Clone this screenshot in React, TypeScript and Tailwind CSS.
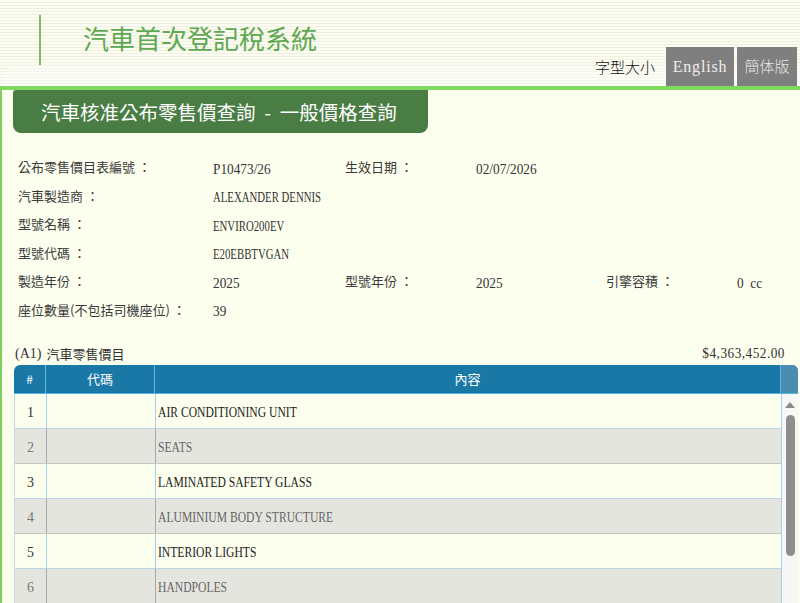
import React from "react";

const sans = "font-['Noto_Sans_CJK_TC','Noto_Sans',sans-serif]";

function Ser({ children, className = "" }: { children: React.ReactNode; className?: string }) {
  return (
    <span
      className={`inline-block whitespace-pre font-['Liberation_Serif',serif] text-[14px] leading-[18px] ${className}`}
    >
      {children}
    </span>
  );
}

type Info = { label: string; value: string; num?: boolean };
const rows: Info[][] = [
  [
    { label: "公布零售價目表編號 ：", value: "P10473/26", num: true },
    { label: "生效日期 ：", value: "02/07/2026", num: true },
  ],
  [{ label: "汽車製造商 ：", value: "ALEXANDER DENNIS" }],
  [{ label: "型號名稱 ：", value: "ENVIRO200EV" }],
  [{ label: "型號代碼 ：", value: "E20EBBTVGAN" }],
  [
    { label: "製造年份 ：", value: "2025", num: true },
    { label: "型號年份 ：", value: "2025", num: true },
    { label: "引擎容積 ：", value: "0  cc", num: true },
  ],
  [{ label: "座位數量(不包括司機座位) ：", value: "39", num: true }],
];

const items = [
  "AIR CONDITIONING UNIT",
  "SEATS",
  "LAMINATED SAFETY GLASS",
  "ALUMINIUM BODY STRUCTURE",
  "INTERIOR LIGHTS",
  "HANDPOLES",
];

export default function App() {
  return (
    <div className="h-[603px] w-[800px] overflow-hidden bg-[#fdffee] text-[#333]">
      {/* Header */}
      <header className="relative h-[86px] bg-[repeating-linear-gradient(to_bottom,#fcfcf2_0px,#fcfcf2_2px,#eef1de_2px,#eef1de_3px)]">
        <div className="absolute bottom-0 left-[2px] right-0 top-[66px] rounded-tl-[12px] bg-white/40" />
        <div className="relative flex h-full">
          <div className="ml-[39px] mt-[15px] h-[50px] w-[2px] bg-[#7dbd6b]" />
          <div className={`ml-[42px] mt-[22px] text-[26px] leading-[32px] text-[#5fa852] ${sans}`}>
            汽車首次登記稅系統
          </div>
          <div className="ml-auto mr-[3px] flex h-[39px] items-center gap-[3px] self-end">
            <span className={`mr-[8px] text-[15px] font-light leading-[20px] text-[#111] ${sans}`}>字型大小</span>
            <div className="flex h-[39px] w-[68px] items-center justify-center bg-[#7f7f7f] text-[#eeeeee]">
              <span className="inline-block whitespace-pre font-['Liberation_Serif',serif] text-[16px] leading-[18px] tracking-[0.8px]">
                English
              </span>
            </div>
            <div className={`flex h-[39px] w-[60px] items-center justify-center bg-[#7f7f7f] text-[15px] font-light text-[#e6e6e6] ${sans}`}>
              簡体版
            </div>
          </div>
        </div>
      </header>
      <div className="h-[4px] bg-[#7fdb5f]" />

      {/* Main */}
      <main className="h-[513px] border-l-[2px] border-[#7ed15f] bg-[#fdffee]">
        <div className="ml-[11px] flex h-[43px] w-[415px] items-center rounded-b-[8px] rounded-tl-[3px] bg-[#4a7d44] pl-[28px]">
          <span className={`text-[19.5px] leading-[24px] text-white ${sans}`}>
            汽車核准公布零售價查詢&nbsp;&nbsp;-&nbsp;&nbsp;一般價格查詢
          </span>
        </div>

        <div className="mt-[20px] pl-[16px]">
          {rows.map((r, i) => (
            <div
              key={i}
              className="grid h-[28.5px] grid-cols-[195px_132px_131px_130px_131px_1fr] items-center"
            >
              {[0, 1, 2].map((k) =>
                r[k] ? (
                  <React.Fragment key={k}>
                    <span className={`text-[13px] leading-[18px] text-[#3a3a3a] ${sans}`}>{r[k].label}</span>
                    <span className="overflow-visible pt-[1px]">
                      <Ser
                        className={
                          r[k].num
                            ? "origin-left scale-x-[0.95] text-[#333]"
                            : "origin-left scale-x-[0.77] text-[#333]"
                        }
                      >
                        {r[k].value}
                      </Ser>
                    </span>
                  </React.Fragment>
                ) : null
              )}
            </div>
          ))}
        </div>

        <div className="mt-[21px] flex h-[18px] items-center justify-between pl-[13px] pr-[15px]">
          <span className="flex items-center">
            <Ser className="text-[#333]">(A1)</Ser>
            <span className={`ml-[5px] text-[13px] leading-[18px] text-[#333] ${sans}`}>汽車零售價目</span>
          </span>
          <Ser className="origin-right scale-x-[0.95] tracking-[0.5px] text-[#333]">$4,363,452.00</Ser>
        </div>

        {/* Table */}
        <div className="ml-[12px] mt-[2px] w-[784px]">
          <div
            className={`grid h-[29px] grid-cols-[32px_109px_626px_17px] overflow-hidden rounded-t-[6px] border-b border-[#56b3e3] bg-[#1a78a6] text-[13px] text-white ${sans}`}
          >
            <div className="flex items-center justify-center border-r border-[#5cb6e4] text-[12px]">#</div>
            <div className="flex items-center justify-center border-r border-[#5cb6e4]">代碼</div>
            <div className="flex items-center justify-center border-r border-[#5cb6e4]">內容</div>
            <div className="bg-[#4b8db0]" />
          </div>
          <div className="flex">
            <div className="w-[767px] border-l border-[#c8d8e0]">
              {items.map((it, i) => {
                const odd = i % 2 === 0;
                return (
                  <div
                    key={it}
                    className={
                      odd
                        ? "grid h-[35px] grid-cols-[32px_109px_625px] border-b border-[#bcd6e8] bg-[#fdffee]"
                        : "grid h-[35px] grid-cols-[32px_109px_625px] border-b border-[#c6c6be] bg-[#e5e5e0]"
                    }
                  >
                    <div
                      className={
                        odd
                          ? "flex items-center justify-center border-r border-[#a9cde9] pt-[3px] text-[#333]"
                          : "flex items-center justify-center border-r border-[#a8a8a8] pt-[3px] text-[#777]"
                      }
                    >
                      <Ser>{String(i + 1)}</Ser>
                    </div>
                    <div className={odd ? "border-r border-[#a9cde9]" : "border-r border-[#a8a8a8]"} />
                    <div
                      className={
                        odd
                          ? "flex items-center pl-[2px] pt-[3px] text-[#222]"
                          : "flex items-center pl-[2px] pt-[3px] text-[#666]"
                      }
                    >
                      <Ser className="origin-left scale-x-[0.83]">{it}</Ser>
                    </div>
                  </div>
                );
              })}
            </div>
            <div className="relative w-[17px] border-l border-[#a9cde9] bg-[#f7f7f7]">
              <svg className="absolute left-[3px] top-[8px]" width="10" height="6" viewBox="0 0 10 6">
                <path d="M5 0 L10 6 L0 6 Z" fill="#8a8a8a" />
              </svg>
              <div className="absolute left-[4px] top-[21px] h-[141px] w-[9px] rounded-full bg-[#8e8e8e]" />
            </div>
          </div>
        </div>
      </main>
    </div>
  );
}
